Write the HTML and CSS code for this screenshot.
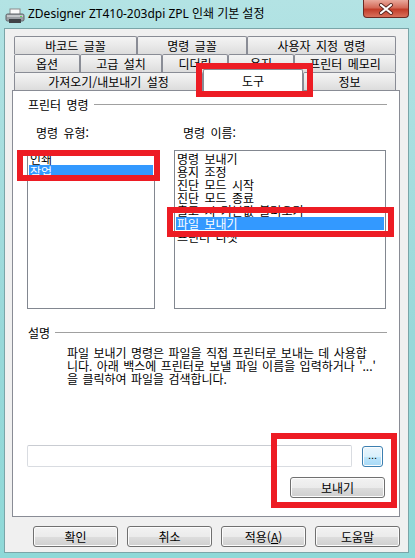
FILE: index.html
```html
<!DOCTYPE html>
<html lang="ko">
<head>
    <meta charset="UTF-8">
    <meta name="viewport" content="width=device-width, initial-scale=1.0">
    <title>ZDesigner ZT410-203dpi ZPL 인쇄 기본 설정</title>

    <link rel="stylesheet" href="styles.css">
</head>
<body>
    <div class="window">
        <div class="titleBar">
            <svg class="appIcon" width="20" height="16" viewBox="0 0 20 16">
                <rect x="5" y="1" width="10" height="6" fill="#fafafa" stroke="#8a8a8a"/>
                <rect x="1" y="6" width="18" height="7" rx="1.5" fill="#9a9ea3" stroke="#5f6368"/>
                <rect x="2" y="7" width="16" height="2" fill="#c4c7ca"/>
                <rect x="4" y="11" width="12" height="4" fill="#3f4347"/>
                <rect x="15" y="8" width="2" height="1" fill="#5fd35f"/>
            </svg>
            <span class="title">ZDesigner ZT410-203dpi ZPL 인쇄 기본 설정</span>
            <div class="closeBtn">
                <svg width="16" height="12" viewBox="0 0 16 12">
                    <path d="M3 2 L13 10 M13 2 L3 10" stroke="#5a2720" stroke-width="4" stroke-linecap="round"/>
                    <path d="M3 2 L13 10 M13 2 L3 10" stroke="#ffffff" stroke-width="2.2" stroke-linecap="round"/>
                </svg>
            </div>
        </div>

        <div class="client">
            <div class="tabStrip">
                <div class="tabRow row1">
                    <div class="tab">바코드 글꼴</div>
                    <div class="tab">명령 글꼴</div>
                    <div class="tab">사용자 지정 명령</div>
                </div>
                <div class="tabRow row2">
                    <div class="tab">옵션</div>
                    <div class="tab">고급 설치</div>
                    <div class="tab">디더링</div>
                    <div class="tab">용지</div>
                    <div class="tab">프린터 메모리</div>
                </div>
                <div class="tabRow row3">
                    <div class="tab">가져오기/내보내기 설정</div>
                    <div class="tab active">도구</div>
                    <div class="tab">정보</div>
                </div>
            </div>

            <div class="panel">
                <div class="groupTitle">
                    <span>프린터 명령</span>
                    <div class="rule"></div>
                </div>

                <div class="lists">
                    <div class="listCol typeCol">
                        <div class="listLabel">명령 유형:</div>
                        <div class="listbox">
                            <div class="item">인쇄</div>
                            <div class="item sel">작업</div>
                        </div>
                    </div>
                    <div class="listCol nameCol">
                        <div class="listLabel">명령 이름:</div>
                        <div class="listbox">
                            <div class="item">명령 보내기</div>
                            <div class="item">용지 조정</div>
                            <div class="item">진단 모드 시작</div>
                            <div class="item">진단 모드 종료</div>
                            <div class="item">출고 시 기본값 불러오기</div>
                            <div class="item sel">파일 보내기</div>
                            <div class="item">프린터 리셋</div>
                        </div>
                    </div>
                </div>

                <div class="groupTitle descTitle">
                    <span>설명</span>
                    <div class="rule"></div>
                </div>
                <p class="desc">파일 보내기 명령은 파일을 직접 프린터로 보내는 데 사용합<br>니다. 아래 백스에 프린터로 보낼 파일 이름을 입력하거나 '...'<br>을 클릭하여 파일을 검색합니다.</p>

                <div class="fileRow">
                    <div class="fileInput"></div>
                    <div class="btn browseBtn">...</div>
                </div>
                <div class="sendRow">
                    <div class="btn sendBtn">보내기</div>
                </div>
            </div>

            <div class="footer">
                <div class="btn">확인</div>
                <div class="btn">취소</div>
                <div class="btn">적용(<u>A</u>)</div>
                <div class="btn">도움말</div>
            </div>
        </div>

        <!-- red annotation boxes drawn over the dialog -->
        <div class="mark markTab"></div>
        <div class="mark markType"></div>
        <div class="mark markName"></div>
        <div class="mark markSend"></div>
    </div>
</body>
</html>
```

FILE: styles.css
```css
*{
    margin: 0;
    padding: 0;
    box-sizing: border-box;
}
body{
    background-color: #a3dcdd;
    font-family: "Noto Sans CJK KR", sans-serif;
    font-size: 12px;
    color: #000;
}
.window{
    width: 415px;
    height: 558px;
    position: relative;
    background: linear-gradient(#b3e3e4, #98d8d9 60%, #8fd9d8);
    display: flex;
    flex-direction: column;
    overflow: hidden;
}

/* title bar */
.titleBar{
    height: 28px;
    display: flex;
    align-items: flex-start;
}
.appIcon{
    margin: 8px 0 0 5px;
}
.title{
    margin: 6px 0 0 3px;
    font-family: "Noto Sans", "Noto Sans CJK KR", sans-serif;
    font-size: 12px;
    line-height: 16px;
    color: #000;
}
.closeBtn{
    margin-left: auto;
    margin-right: 6px;
    width: 46px;
    height: 18px;
    border: 1px solid #6b2a22;
    border-top: none;
    border-radius: 0 0 4px 4px;
    background: linear-gradient(#e9a99c, #d46a58 45%, #c23d29 55%, #d9705b);
    display: flex;
    align-items: center;
    justify-content: center;
}

/* client area */
.client{
    flex: 1;
    margin: 0 6px 5px 4px;
    border: 1px solid #7aa5a8;
    background-color: #f0f0f0;
    padding: 7px 8px 0 7px;
    display: flex;
    flex-direction: column;
}
.tabStrip{
    margin: 0 4px 0 2px;
}
.tabRow{
    display: flex;
    height: 18px;
}
.tab{
    height: 18px;
    border: 1px solid #898c95;
    border-bottom: none;
    border-radius: 2px 2px 0 0;
    background: linear-gradient(#f4f4f4, #e9e9e9 50%, #dcdcdc);
    display: flex;
    align-items: center;
    justify-content: center;
    line-height: 13px;
    word-spacing: 2px;
}
.row1 .tab:nth-child(1){ width: 123px; }
.row1 .tab:nth-child(2){ width: 110px; }
.row1 .tab:nth-child(3){ width: 149px; }
.row2 .tab:nth-child(1){ width: 66px; }
.row2 .tab:nth-child(2){ width: 82px; }
.row2 .tab:nth-child(3){ width: 66px; }
.row2 .tab:nth-child(4){ width: 66px; }
.row2 .tab:nth-child(5){ width: 102px; }
.row3 .tab:nth-child(1){ width: 189px; }
.row3 .tab:nth-child(2){ width: 100px; }
.row3 .tab:nth-child(3){ width: 93px; }
.tab.active{
    height: 22px;
    margin-top: -3px;
    margin-bottom: -1px;
    background: #fff;
    position: relative;
    z-index: 1;
    padding-bottom: 1px;
}

.panel{
    height: 427px;
    border: 1px solid #898c95;
    background-color: #fff;
    display: flex;
    flex-direction: column;
}
.groupTitle{
    display: flex;
    align-items: center;
    height: 13px;
    line-height: 13px;
    margin: 7px 12px 0 15px;
    word-spacing: 2px;
}
.groupTitle .rule{
    flex: 1;
    height: 1px;
    margin-left: 5px;
    background-color: #a0a0a0;
}
.descTitle{
    margin-top: 17px;
}
.lists{
    display: flex;
    gap: 19px;
    margin: 15px 0 0 14px;
}
.listLabel{
    height: 13px;
    line-height: 13px;
    padding-left: 9px;
    margin-bottom: 11px;
    word-spacing: 2px;
}
.listbox{
    height: 159px;
    border: 1px solid #828790;
    padding: 1px;
    background-color: #fff;
}
.typeCol .listbox{ width: 128px; }
.nameCol .listbox{ width: 212px; }
.item{
    height: 13px;
    line-height: 13px;
    padding-left: 1px;
    white-space: nowrap;
    word-spacing: 2px;
}
.item.sel{
    background-color: #3399ff;
    color: #fff;
}
.desc{
    margin: 7px 0 0 54px;
    line-height: 13px;
    word-spacing: 1px;
    white-space: nowrap;
}

.fileRow{
    display: flex;
    gap: 10px;
    margin: 60px 0 0 14px;
}
.fileInput{
    width: 325px;
    height: 22px;
    border: 1px solid #d9dce1;
    border-top-color: #c9ccd2;
    border-radius: 2px;
    background-color: #fff;
}
.btn{
    height: 21px;
    border: 1px solid #707070;
    border-radius: 3px;
    background: linear-gradient(#f2f2f2, #ebebeb 50%, #dddddd 51%, #cfcfcf);
    display: flex;
    align-items: center;
    justify-content: center;
    line-height: 13px;
    box-shadow: inset 0 0 0 1px #fcfcfc;
}
.browseBtn{
    width: 21px;
    margin-top: 1px;
    border-color: #3c7fb1;
    background: linear-gradient(#eaf6fd, #d9f0fc 50%, #bee6fd 51%, #a7d9f5);
    font-family: "Liberation Sans", sans-serif;
    font-size: 11px;
    padding-bottom: 2px;
}
.sendRow{
    display: flex;
    margin: 10px 0 0 277px;
}
.sendBtn{
    width: 95px;
}
.footer{
    display: flex;
    justify-content: flex-end;
    gap: 9px;
    margin-top: 9px;
}
.footer .btn{
    width: 85px;
}
.footer u{
    text-decoration-thickness: 1px;
}

/* annotation boxes */
.mark{
    position: absolute;
    border: 6px solid #ed1c24;
    z-index: 5;
}
.markTab{
    left: 196px;
    top: 63px;
    width: 117px;
    height: 34px;
}
.markType{
    left: 17px;
    top: 150px;
    width: 143px;
    height: 31px;
}
.markName{
    left: 167px;
    top: 207px;
    width: 227px;
    height: 30px;
}
.markSend{
    left: 271px;
    top: 433px;
    width: 126px;
    height: 75px;
}
```
